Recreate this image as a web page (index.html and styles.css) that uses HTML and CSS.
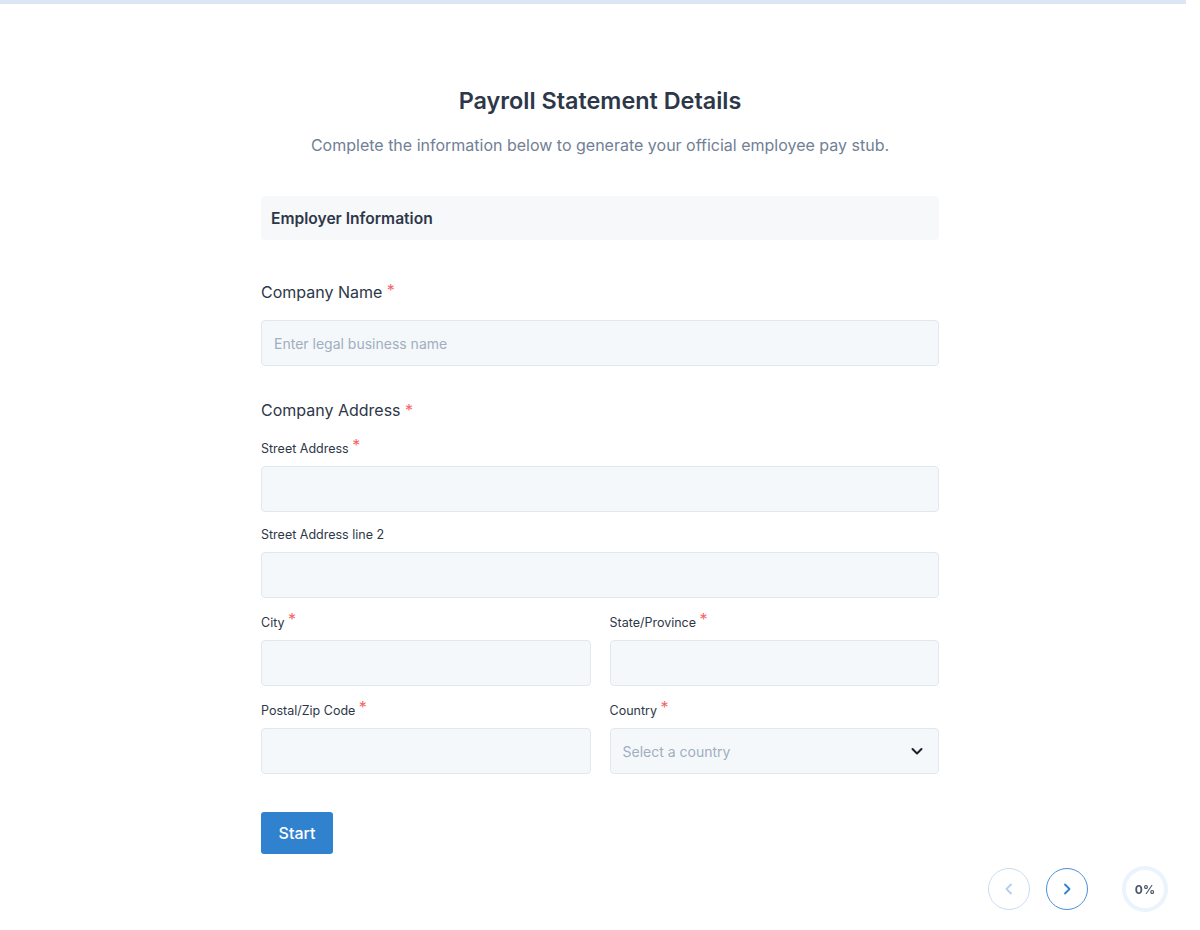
FILE: index.html
```html
<!DOCTYPE html>
<html lang="en">
<head>
    <meta charset="UTF-8">
    <meta name="viewport" content="width=device-width, initial-scale=1.0">
    <title>Payroll Statement Details</title>
    <link rel="stylesheet" href="styles.css">
</head>
<body>
    <div class="top-bar"></div>

    <div class="container">
        <h1>Payroll Statement Details</h1>
        <p class="subtitle">Complete the information below to generate your official employee pay stub.</p>

        <div class="section-header">Employer Information</div>

        <form id="form">
            <div class="form-group main-group">
                <label class="main-label" for="company">Company Name <span class="req">*</span></label>
                <input type="text" id="company" placeholder="Enter legal business name">
            </div>

            <div class="address">
                <div class="main-label address-title">Company Address <span class="req">*</span></div>

                <div class="form-group">
                    <label for="street">Street Address <span class="req">*</span></label>
                    <input type="text" id="street">
                </div>

                <div class="form-group">
                    <label for="street2">Street Address line 2</label>
                    <input type="text" id="street2">
                </div>

                <div class="form-row">
                    <div class="form-group">
                        <label for="city">City <span class="req">*</span></label>
                        <input type="text" id="city">
                    </div>
                    <div class="form-group">
                        <label for="state">State/Province <span class="req">*</span></label>
                        <input type="text" id="state">
                    </div>
                </div>

                <div class="form-row">
                    <div class="form-group">
                        <label for="zip">Postal/Zip Code <span class="req">*</span></label>
                        <input type="text" id="zip">
                    </div>
                    <div class="form-group">
                        <label for="country">Country <span class="req">*</span></label>
                        <div class="select-wrap">
                            <select id="country">
                                <option value="">Select a country</option>
                                <option>United States</option>
                                <option>Canada</option>
                                <option>United Kingdom</option>
                            </select>
                            <svg class="chevron" width="14" height="14" viewBox="0 0 14 14" fill="none">
                                <path d="M2.5 5 L7 9.5 L11.5 5" stroke="#1a202c" stroke-width="2" stroke-linecap="round" stroke-linejoin="round"/>
                            </svg>
                        </div>
                    </div>
                </div>
            </div>

            <button type="button" class="start-btn">Start</button>
        </form>
    </div>

    <div class="nav">
        <button type="button" class="nav-btn prev" aria-label="Previous">
            <svg width="16" height="16" viewBox="0 0 16 16" fill="none">
                <path d="M10 3.5 L5.5 8 L10 12.5" stroke="#b3cfee" stroke-width="1.8" stroke-linecap="round" stroke-linejoin="round"/>
            </svg>
        </button>
        <button type="button" class="nav-btn next" aria-label="Next">
            <svg width="16" height="16" viewBox="0 0 16 16" fill="none">
                <path d="M6 3.5 L10.5 8 L6 12.5" stroke="#3182ce" stroke-width="1.8" stroke-linecap="round" stroke-linejoin="round"/>
            </svg>
        </button>
        <div class="progress">0%</div>
    </div>
</body>
</html>
```

FILE: styles.css
```css
body {
    font-family: Inter, "Noto Sans", sans-serif;
    margin: 0;
    padding: 0;
    background-color: #fff;
    color: #2d3748;
}

.top-bar {
    width: 1186px;
    height: 4px;
    background-color: #dbe7f5;
}

.container {
    width: 678px;
    margin: 0 auto;
    padding-top: 81px;
}

h1 {
    margin: 0;
    text-align: center;
    font-size: 23.4px;
    line-height: 32px;
    font-weight: 600;
    color: #2d3748;
}

.subtitle {
    margin: 16px 0 0;
    text-align: center;
    font-size: 16px;
    line-height: 24px;
    color: #718096;
}

.section-header {
    margin-top: 39px;
    height: 43px;
    padding: 1px 10px 0;
    line-height: 44px;
    background-color: #f7f8fa;
    border-radius: 4px;
    font-size: 15.6px;
    font-weight: 600;
    color: #2d3748;
}

form {
    display: flex;
    flex-direction: column;
}

.form-group {
    display: flex;
    flex-direction: column;
    flex: 1;
}

.form-group label {
    font-size: 12.5px;
    line-height: 18px;
    margin-bottom: 8px;
    color: #2d3748;
}

.main-label,
.form-group .main-label {
    font-size: 16px;
    line-height: 24px;
    color: #2d3748;
}

.main-group {
    margin-top: 40px;
}

.main-group .main-label {
    margin-bottom: 16px;
}

.req {
    color: #f56565;
}

.form-group label .req {
    font-size: 16px;
    line-height: 10px;
    position: relative;
    top: -2px;
}

input,
select {
    box-sizing: border-box;
    height: 46px;
    width: 100%;
    padding: 0 12px;
    font-family: inherit;
    font-size: 14px;
    color: #2d3748;
    background-color: #f5f8fb;
    border: 1px solid #e2e8f0;
    border-radius: 4px;
    outline: none;
}

input::placeholder {
    color: #a0aec0;
}

.address {
    margin-top: 32px;
    display: flex;
    flex-direction: column;
    gap: 14px;
}

.address-title {
    margin-bottom: 4px;
}

.form-row {
    display: flex;
    gap: 19px;
    margin-top: 2px;
}

.select-wrap {
    position: relative;
}

select {
    appearance: none;
    -webkit-appearance: none;
    color: #a0aec0;
}

.chevron {
    position: absolute;
    right: 15px;
    top: 16px;
    pointer-events: none;
}

.start-btn {
    align-self: flex-start;
    margin-top: 38px;
    width: 72px;
    height: 42px;
    padding: 0;
    font-family: inherit;
    font-size: 16px;
    font-weight: 500;
    color: #fff;
    background-color: #3182ce;
    border: none;
    border-radius: 3px;
    cursor: pointer;
}

.start-btn:hover {
    background-color: #2b6cb0;
}

.nav {
    position: fixed;
    right: 32px;
    bottom: 18px;
    display: flex;
    align-items: center;
}

.nav-btn {
    box-sizing: border-box;
    width: 42px;
    height: 42px;
    border-radius: 50%;
    background: #fff;
    display: flex;
    align-items: center;
    justify-content: center;
    padding: 0;
    cursor: pointer;
}

.prev {
    border: 1px solid #c7ddf3;
    margin-right: 16px;
}

.next {
    border: 1.5px solid #4a8fd6;
    margin-right: 34px;
}

.progress {
    box-sizing: border-box;
    width: 46px;
    height: 46px;
    border-radius: 50%;
    border: 4px solid #ebf3fc;
    display: flex;
    align-items: center;
    justify-content: center;
    font-size: 12px;
    font-weight: 700;
    color: #4a5568;
}
```
